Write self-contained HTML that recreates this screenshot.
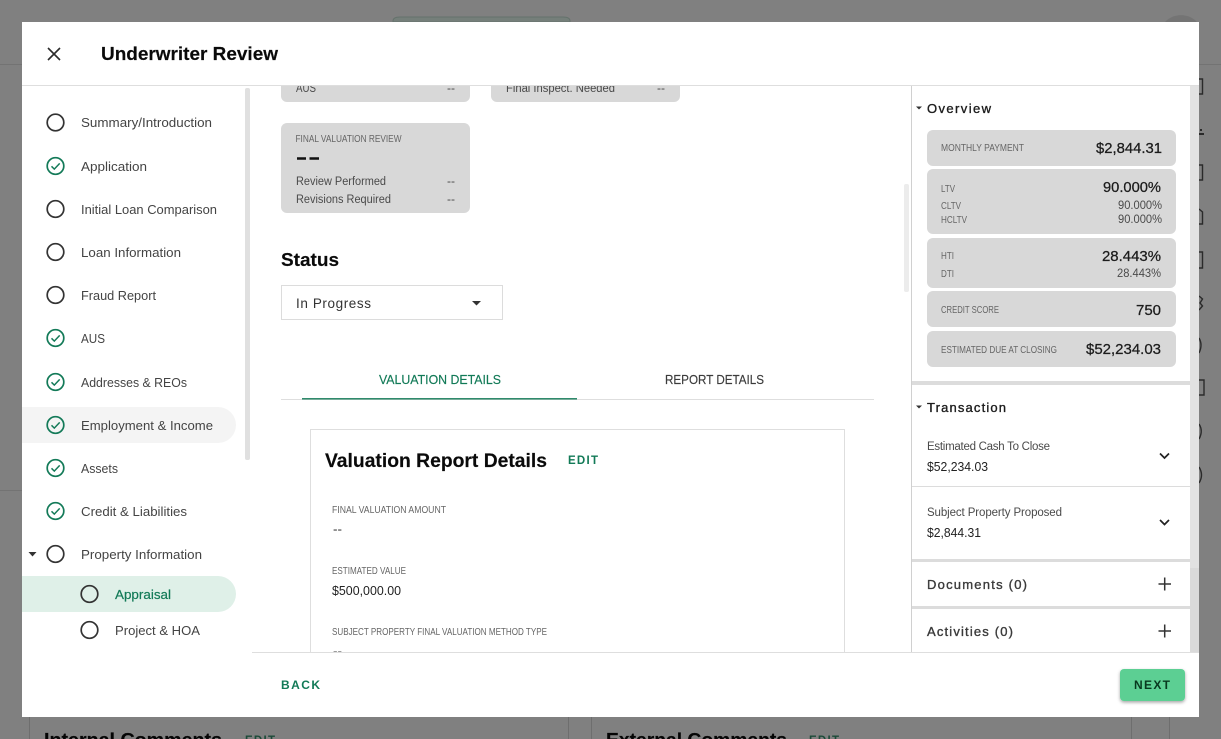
<!DOCTYPE html>
<html><head><meta charset="utf-8">
<style>
html,body{margin:0;padding:0;width:1221px;height:739px;overflow:hidden;background:#808080}
svg{display:block}
text{font-family:"Liberation Sans","Noto Sans CJK JP",sans-serif;fill:#3a3a3a;font-size:13px}
.p{font-weight:bold;fill:#0a0a0a;stroke:#0a0a0a;stroke-width:.15}
.n{font-size:13px;fill:#444}
.sm{font-size:10px;fill:#666}
.v{font-size:14.5px;fill:#1c1c1c;stroke:#1c1c1c;stroke-width:.25}
.s{font-size:11.5px;fill:#4a4a4a}
.h{font-size:13px;fill:#1c1c1c;stroke:#1c1c1c;stroke-width:.35}
.e{font-weight:bold;font-size:11.5px;fill:#127a57}
</style></head>
<body>
<svg width="1221" height="739" viewBox="0 0 1221 739" xmlns="http://www.w3.org/2000/svg">
<defs>
<filter id="sh" x="-20%" y="-20%" width="140%" height="150%"><feDropShadow dx="0" dy="1.5" stdDeviation="1.5" flood-color="#000" flood-opacity=".35"/></filter>
<clipPath id="mid"><rect x="252" y="86" width="659" height="566"/></clipPath>
<g id="o"><circle r="8.3" fill="none" stroke="#333" stroke-width="1.7"/></g>
<g id="c"><circle r="8.3" fill="none" stroke="#137a58" stroke-width="1.7"/><path d="M-4 .3 L-1.2 3.1 L4.2 -2.6" fill="none" stroke="#137a58" stroke-width="1.5"/></g>
</defs>

<!-- background -->
<rect width="1221" height="739" fill="#808080"/>
<path d="M0 64.5H22M1199 64.5H1221M0 490.5H22" stroke="#737373"/>
<path d="M393 22 V21 Q393 17 400 17 H563 Q570 17 570 21 V22Z" fill="#757f7a" stroke="#65726c"/>
<path d="M1165 22 A22 22 0 0 1 1197 22Z" fill="#747474"/>
<g fill="none" stroke="#2a2a2a" stroke-width="1.4">
<path d="M1199 79H1202.500V94H1199"/>
<path d="M1199 165H1202.500V180H1199"/>
<path d="M1199 209L1202.500 212V224H1199"/>
<path d="M1199 252H1202.500V268H1199"/>
<path d="M1199 296L1202.500 299L1200 303L1202.500 306L1199 310"/>
<path d="M1199 338Q1203 345 1199 353"/>
<path d="M1199 380H1204V395H1199"/>
<path d="M1199 424Q1203.500 431 1199 439"/>
<path d="M1199 467Q1204 475 1199 483"/>
</g>
<path d="M1200 129h2v2h-2zM1199 133h5v2h-5z" fill="#2a2a2a"/>
<path d="M29.5 717V739M568.5 717V739M591.5 717V739M1131.5 717V739M1169.5 717V739" stroke="#6e6e6e"/>
<text x="44" y="746" class="p" style="font-size:18px;fill:#050505" textLength="178" lengthAdjust="spacingAndGlyphs">Internal Comments</text>
<text x="245" y="744" class="e" style="fill:#1c4a38" textLength="30">EDIT</text>
<text x="606" y="746" class="p" style="font-size:18px;fill:#050505" textLength="181" lengthAdjust="spacingAndGlyphs">External Comments</text>
<text x="809" y="744" class="e" style="fill:#1c4a38" textLength="30">EDIT</text>

<!-- modal -->
<rect x="22" y="22" width="1177" height="695" fill="#fff"/>
<path d="M22 85.5H1199" stroke="#dedede"/>
<path d="M48 48L60 60M60 48L48 60" stroke="#2b2b2b" stroke-width="1.6" fill="none"/>
<text x="101" y="60" class="p" style="font-size:18.5px" textLength="177" lengthAdjust="spacingAndGlyphs">Underwriter Review</text>

<!-- left nav -->
<rect x="245" y="88" width="5" height="372" rx="2" fill="#e0e0e0"/>
<path d="M22 407H218A18 18 0 0 1 218 443H22Z" fill="#f4f4f4"/>
<path d="M22 576H218A18 18 0 0 1 218 612H22Z" fill="#dff0e8"/>
<use href="#o" x="55.5" y="122.5"/><text x="81" y="127" class="n" textLength="131" lengthAdjust="spacingAndGlyphs">Summary/Introduction</text>
<use href="#c" x="55.5" y="166"/><text x="81" y="171" class="n" textLength="66" lengthAdjust="spacingAndGlyphs">Application</text>
<use href="#o" x="55.5" y="209"/><text x="81" y="214" class="n" textLength="136" lengthAdjust="spacingAndGlyphs">Initial Loan Comparison</text>
<use href="#o" x="55.5" y="252"/><text x="81" y="257" class="n" textLength="100" lengthAdjust="spacingAndGlyphs">Loan Information</text>
<use href="#o" x="55.5" y="295"/><text x="81" y="300" class="n" textLength="75" lengthAdjust="spacingAndGlyphs">Fraud Report</text>
<use href="#c" x="55.5" y="338"/><text x="81" y="343" class="n" textLength="24" lengthAdjust="spacingAndGlyphs">AUS</text>
<use href="#c" x="55.5" y="382"/><text x="81" y="387" class="n" textLength="106" lengthAdjust="spacingAndGlyphs">Addresses &amp; REOs</text>
<use href="#c" x="55.5" y="425"/><text x="81" y="430" class="n" textLength="132" lengthAdjust="spacingAndGlyphs">Employment &amp; Income</text>
<use href="#c" x="55.5" y="468"/><text x="81" y="473" class="n" textLength="37" lengthAdjust="spacingAndGlyphs">Assets</text>
<use href="#c" x="55.5" y="511"/><text x="81" y="516" class="n" textLength="106" lengthAdjust="spacingAndGlyphs">Credit &amp; Liabilities</text>
<path d="M28.5 552H36.5L32.5 556.5Z" fill="#333"/>
<use href="#o" x="55.5" y="554"/><text x="81" y="559" class="n" textLength="121" lengthAdjust="spacingAndGlyphs">Property Information</text>
<use href="#o" x="89.5" y="594"/><text x="115" y="599" class="n" style="fill:#127a57;stroke:#127a57;stroke-width:.2" textLength="56" lengthAdjust="spacingAndGlyphs">Appraisal</text>
<use href="#o" x="89.5" y="630"/><text x="115" y="635" class="n" textLength="85" lengthAdjust="spacingAndGlyphs">Project &amp; HOA</text>

<!-- middle -->
<g clip-path="url(#mid)">
<rect x="281" y="60" width="189" height="42" rx="6" fill="#d8d8d8"/>
<rect x="491" y="60" width="189" height="42" rx="6" fill="#d8d8d8"/>
<text x="296" y="92" class="s" textLength="20" lengthAdjust="spacingAndGlyphs">AUS</text>
<text x="447" y="92" class="s" textLength="8" lengthAdjust="spacingAndGlyphs">--</text>
<text x="506" y="92" class="s" textLength="109" lengthAdjust="spacingAndGlyphs">Final Inspect. Needed</text>
<text x="657" y="92" class="s" textLength="8" lengthAdjust="spacingAndGlyphs">--</text>
<rect x="281" y="123" width="189" height="90" rx="6" fill="#d8d8d8"/>
<text x="295.500" y="142" class="sm" textLength="106" lengthAdjust="spacingAndGlyphs">FINAL VALUATION REVIEW</text>
<path d="M297 158.500H306M309.500 158.500H319" stroke="#111" stroke-width="2.400"/>
<text x="296" y="185" class="s" textLength="90" lengthAdjust="spacingAndGlyphs">Review Performed</text>
<text x="447" y="185" class="s" textLength="8" lengthAdjust="spacingAndGlyphs">--</text>
<text x="296" y="203" class="s" textLength="95" lengthAdjust="spacingAndGlyphs">Revisions Required</text>
<text x="447" y="203" class="s" textLength="8" lengthAdjust="spacingAndGlyphs">--</text>
<text x="281" y="266" class="p" style="font-size:18.5px" textLength="58" lengthAdjust="spacingAndGlyphs">Status</text>
<rect x="281.500" y="285.500" width="221" height="34" fill="#fff" stroke="#dcdcdc"/>
<text x="296" y="308" style="font-size:13.5px;fill:#333" textLength="75">In Progress</text>
<path d="M472 301H481L476.500 305.500Z" fill="#333"/>
<text x="379" y="384" style="font-size:12.500px;fill:#127a57;stroke:#127a57;stroke-width:.15" textLength="122" lengthAdjust="spacingAndGlyphs">VALUATION DETAILS</text>
<text x="665" y="384" style="font-size:12.500px;fill:#3c3c3c;stroke:#3c3c3c;stroke-width:.15" textLength="99" lengthAdjust="spacingAndGlyphs">REPORT DETAILS</text>
<path d="M281 399.500H874" stroke="#dedede"/>
<path d="M302 398.800H577" stroke="#127a57" stroke-width="1.400"/>
<rect x="310.500" y="429.500" width="534" height="261" fill="#fff" stroke="#dedede"/>
<text x="325" y="467" class="p" style="font-size:19px" textLength="222" lengthAdjust="spacingAndGlyphs">Valuation Report Details</text>
<text x="568" y="464" class="e" textLength="30">EDIT</text>
<text x="332" y="513" class="sm" textLength="114" lengthAdjust="spacingAndGlyphs">FINAL VALUATION AMOUNT</text>
<text x="333" y="533" class="s" style="fill:#222" textLength="9" lengthAdjust="spacingAndGlyphs">--</text>
<text x="332" y="574" class="sm" textLength="74" lengthAdjust="spacingAndGlyphs">ESTIMATED VALUE</text>
<text x="332" y="595" style="font-size:12.500px;fill:#222" textLength="69" lengthAdjust="spacingAndGlyphs">$500,000.00</text>
<text x="332" y="635" class="sm" textLength="215" lengthAdjust="spacingAndGlyphs">SUBJECT PROPERTY FINAL VALUATION METHOD TYPE</text>
<text x="333" y="655" class="s" style="fill:#222" textLength="9" lengthAdjust="spacingAndGlyphs">--</text>
<rect x="904" y="184" width="5" height="108" rx="2" fill="#ececec"/>
</g>

<!-- right panel -->
<path d="M911.500 86V652" stroke="#d0d0d0"/>
<rect x="1190" y="86" width="9" height="566" fill="#dadada"/>
<rect x="1190" y="86" width="9" height="482" fill="#e2e2e2"/>
<path d="M916 106.500H922L919 109.500Z" fill="#333"/>
<text x="927" y="113" class="h" textLength="64">Overview</text>

<rect x="927" y="130" width="249" height="36" rx="6" fill="#d8d8d8"/>
<text x="941" y="151" class="sm" textLength="83" lengthAdjust="spacingAndGlyphs">MONTHLY PAYMENT</text>
<text x="1096" y="153" class="v" textLength="66" lengthAdjust="spacingAndGlyphs">$2,844.31</text>

<rect x="927" y="169" width="249" height="65" rx="6" fill="#d8d8d8"/>
<text x="941" y="192" class="sm" textLength="14" lengthAdjust="spacingAndGlyphs">LTV</text>
<text x="1103" y="192" class="v" textLength="58" lengthAdjust="spacingAndGlyphs">90.000%</text>
<text x="941" y="209" class="sm" textLength="20" lengthAdjust="spacingAndGlyphs">CLTV</text>
<text x="1118" y="209" class="s" textLength="44" lengthAdjust="spacingAndGlyphs">90.000%</text>
<text x="941" y="223" class="sm" textLength="26" lengthAdjust="spacingAndGlyphs">HCLTV</text>
<text x="1118" y="223" class="s" textLength="44" lengthAdjust="spacingAndGlyphs">90.000%</text>

<rect x="927" y="238" width="249" height="50" rx="6" fill="#d8d8d8"/>
<text x="941" y="259" class="sm" textLength="13" lengthAdjust="spacingAndGlyphs">HTI</text>
<text x="1102" y="261" class="v" textLength="59" lengthAdjust="spacingAndGlyphs">28.443%</text>
<text x="941" y="277" class="sm" textLength="13" lengthAdjust="spacingAndGlyphs">DTI</text>
<text x="1117" y="277" class="s" textLength="44" lengthAdjust="spacingAndGlyphs">28.443%</text>

<rect x="927" y="291" width="249" height="36" rx="6" fill="#d8d8d8"/>
<text x="941" y="313" class="sm" textLength="58" lengthAdjust="spacingAndGlyphs">CREDIT SCORE</text>
<text x="1136" y="315" class="v" textLength="25" lengthAdjust="spacingAndGlyphs">750</text>

<rect x="927" y="331" width="249" height="36" rx="6" fill="#d8d8d8"/>
<text x="941" y="353" class="sm" textLength="116" lengthAdjust="spacingAndGlyphs">ESTIMATED DUE AT CLOSING</text>
<text x="1086" y="354" class="v" textLength="75" lengthAdjust="spacingAndGlyphs">$52,234.03</text>

<rect x="912" y="381" width="278" height="4" fill="#dcdcdc"/>
<path d="M916 405.500H922L919 408.500Z" fill="#333"/>
<text x="927" y="412" class="h" textLength="79">Transaction</text>
<text x="927" y="450" class="s" textLength="123">Estimated Cash To Close</text>
<text x="927" y="471" style="font-size:12.500px;fill:#222" textLength="61" lengthAdjust="spacingAndGlyphs">$52,234.03</text>
<path d="M1160 453.500L1164.500 458L1169 453.500" fill="none" stroke="#222" stroke-width="1.700"/>
<path d="M912 486.500H1190" stroke="#dcdcdc"/>
<text x="927" y="516" class="s" textLength="135">Subject Property Proposed</text>
<text x="927" y="537" style="font-size:12.500px;fill:#222" textLength="54" lengthAdjust="spacingAndGlyphs">$2,844.31</text>
<path d="M1160 520L1164.500 524.500L1169 520" fill="none" stroke="#222" stroke-width="1.700"/>
<rect x="912" y="559" width="278" height="3" fill="#dcdcdc"/>
<text x="927" y="589" class="h" style="fill:#3a3a3a;stroke:#3a3a3a" textLength="100">Documents (0)</text>
<path d="M1158.500 584H1171M1164.700 577.500V590.500" stroke="#333" stroke-width="1.500"/>
<rect x="912" y="606" width="278" height="3" fill="#dcdcdc"/>
<text x="927" y="636" class="h" style="fill:#3a3a3a;stroke:#3a3a3a" textLength="86">Activities (0)</text>
<path d="M1158.500 631H1171M1164.700 624.500V637.500" stroke="#333" stroke-width="1.500"/>

<!-- footer -->
<rect x="252" y="653" width="947" height="64" fill="#fff"/>
<path d="M252 652.500H1199" stroke="#dedede"/>
<text x="281" y="689" class="e" style="font-size:12px" textLength="39">BACK</text>
<rect x="1120" y="669" width="65" height="32" rx="4" fill="#5bcf93" filter="url(#sh)"/>
<text x="1134" y="689" style="font-size:12px;font-weight:bold;fill:#08391f" textLength="36">NEXT</text>
</svg>
</body></html>
